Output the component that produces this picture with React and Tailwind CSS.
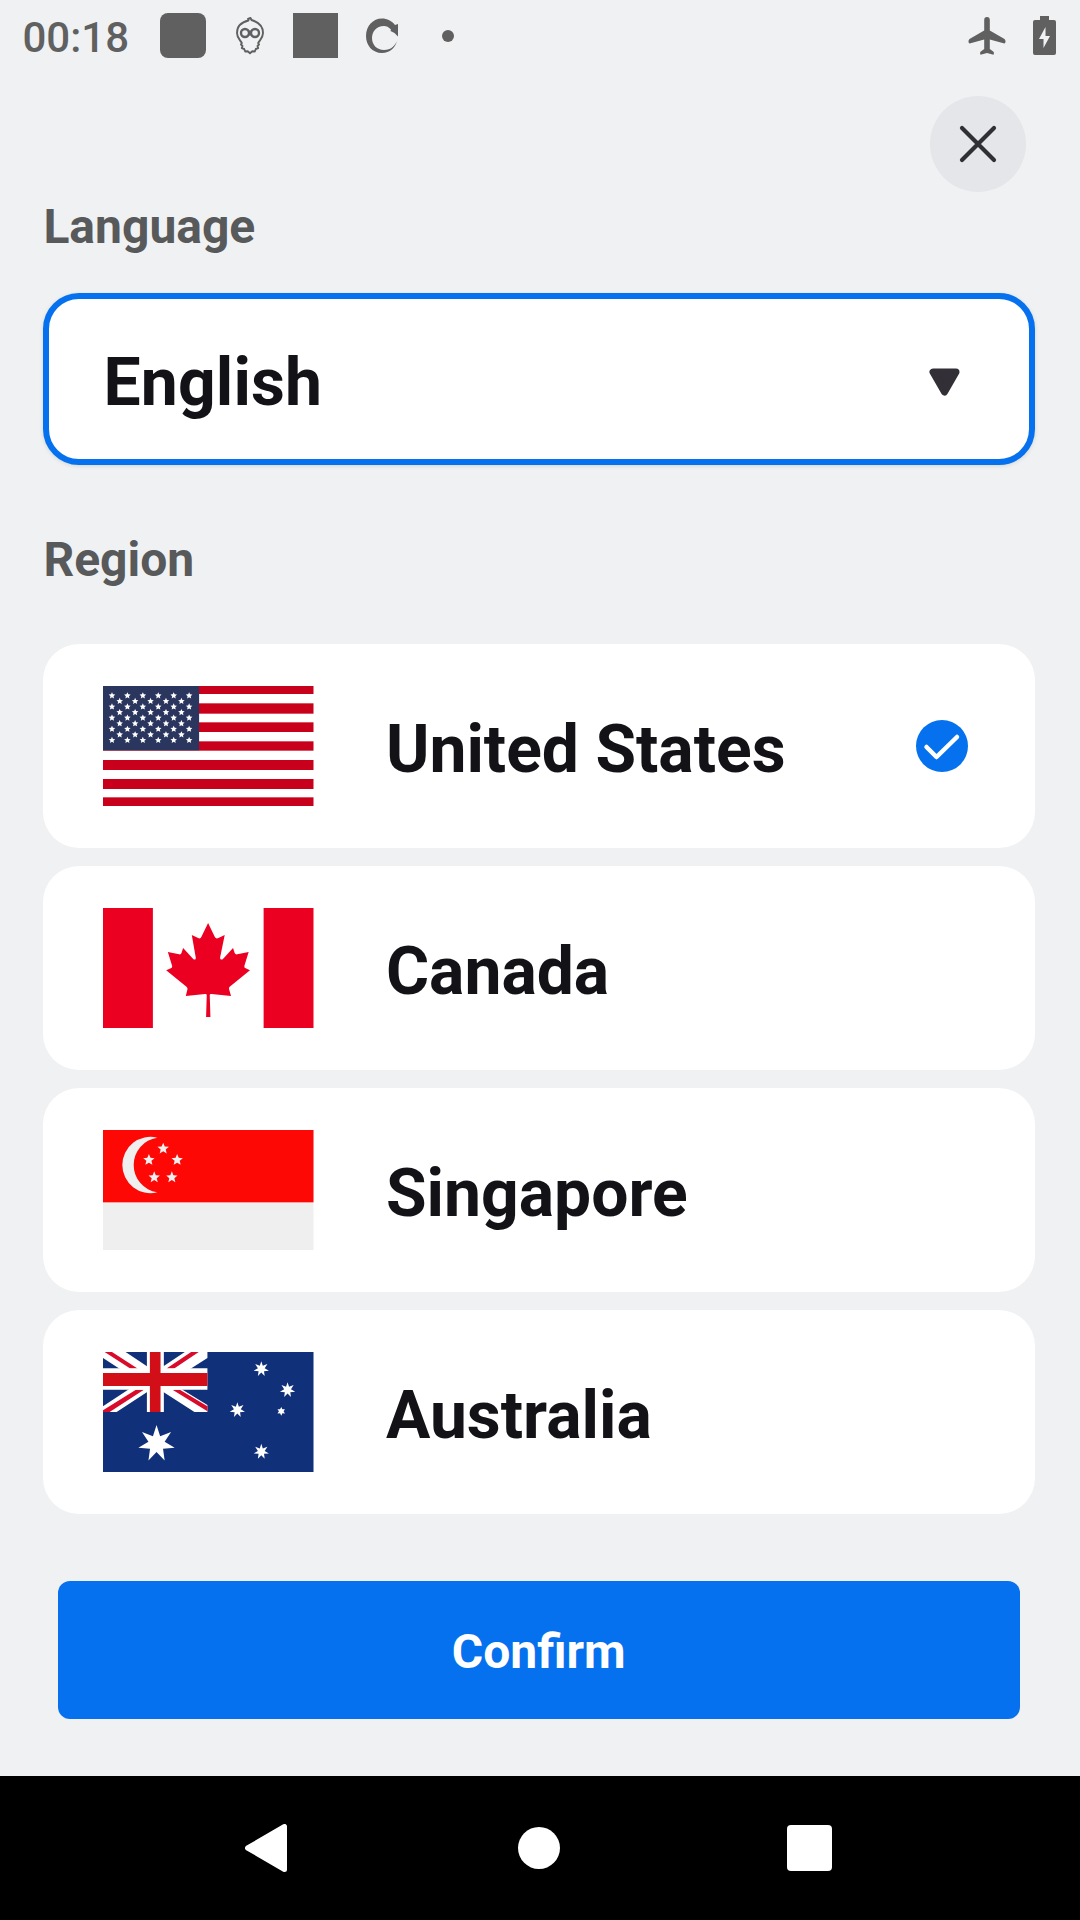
function starPoints(cx, cy, outer, inner, tips = 5) {
  const pts = [];
  for (let i = 0; i < tips * 2; i++) {
    const r = i % 2 ? inner : outer;
    const a = (Math.PI * i) / tips - Math.PI / 2;
    pts.push(`${(cx + r * Math.cos(a)).toFixed(2)},${(cy + r * Math.sin(a)).toFixed(2)}`);
  }
  return pts.join(' ');
}

function FlagUS() {
  const stars = [];
  for (let row = 0; row < 9; row++) {
    const odd = row % 2 === 1;
    for (let col = 0; col < (odd ? 5 : 6); col++) {
      stars.push([66 + col * 46.4 + (odd ? 23.2 : 0), 77 + row * 16.7]);
    }
  }
  const stripes = [[48, 24], [100, 31], [157, 29], [214, 28], [270, 30], [327, 30], [382, 26]];
  return (
    <svg className="h-[120px] w-[210.5px] shrink-0" viewBox="39 48 633 360" preserveAspectRatio="none">
      <rect x="39" y="48" width="633" height="360" fill="#fff" />
      {stripes.map(([y, h]) => <rect key={y} x="39" y={y} width="633" height={h} fill="#c9001b" />)}
      <rect x="39" y="48" width="289" height="193" fill="#2b365f" />
      {stars.map(([x, y]) => <polygon key={`${x}-${y}`} points={starPoints(x, y, 10.3, 4.9)} fill="#fff" />)}
    </svg>
  );
}

function FlagCanada() {
  return (
    <svg className="h-[120px] w-[210.5px] shrink-0" viewBox="39 54 633 360" preserveAspectRatio="none">
      <rect x="39" y="54" width="633" height="360" fill="#fff" />
      <rect x="39" y="54" width="150" height="360" fill="#eb0021" />
      <rect x="522" y="54" width="150" height="360" fill="#eb0021" />
      <path
        fill="#eb0021"
        d="M355 99L375 140Q379 148 386 144L405 135L391 203Q391 211 399 208L430 174L435 189Q437 194 443 193L477 186L464 228Q463 233 468 235L481 241L420 290Q417 293 418 297L424 318L365 312Q360 311 360 316L362 381H349L351 316Q351 311 346 312L288 318L293 298Q294 293 290 290L229 241L243 235Q248 233 247 228L234 186L268 193Q274 194 275 189L280 174L311 208Q319 211 318 203L306 135L325 144Q332 148 335 140Z"
      />
    </svg>
  );
}

function FlagSingapore() {
  const stars = [[220, 101], [177, 135], [262, 135], [193, 187], [246, 187]];
  return (
    <svg className="h-[120px] w-[210.5px] shrink-0" viewBox="39 45 633 360" preserveAspectRatio="none">
      <rect x="39" y="45" width="633" height="360" fill="#efefef" />
      <rect x="39" y="45" width="633" height="217" fill="#fe0806" />
      <path d="M202 68A84.5 84.5 0 1 0 202 232A82.900 82.900 0 0 1 202 68Z" fill="#efefef" />
      {stars.map(([x, y]) => <polygon key={`${x}-${y}`} points={starPoints(x, y, 18, 8)} fill="#efefef" />)}
    </svg>
  );
}

function FlagAustralia() {
  const stars = [[515, 102], [594, 165], [443, 225], [515, 350]];
  return (
    <svg className="h-[120px] w-[210.5px] shrink-0" viewBox="39 51 633 360" preserveAspectRatio="none">
      <rect x="39" y="51" width="633" height="360" fill="#10307a" />
      <path d="M39 51H107L196 110L285 51H353V69L240 141L353 210V231H314L196 155L80 231H39V214L150 141L39 69Z" fill="#fff" />
      <path d="M44 51H66L144 101H122ZM304 51H327L252 101H229ZM39 231V226L138 164H162L59 231ZM248 164H270L353 214V229Z" fill="#d90b2b" />
      <path d="M171 51H222V100H353V164H222V231H171V164H39V100H171Z" fill="#fff" />
      <path d="M180 51H212V114H353V153H212V231H180V153H39V114H180Z" fill="#d20e18" />
      <polygon points={starPoints(200, 326, 56, 25, 7)} fill="#fff" />
      {stars.map(([x, y]) => <polygon key={`${x}-${y}`} points={starPoints(x, y, 23.5, 10.5, 7)} fill="#fff" />)}
      <polygon points={starPoints(575, 229, 13, 7, 6)} fill="#fff" />
    </svg>
  );
}

const regions = [
  { name: 'United States', Flag: FlagUS, selected: true },
  { name: 'Canada', Flag: FlagCanada },
  { name: 'Singapore', Flag: FlagSingapore },
  { name: 'Australia', Flag: FlagAustralia },
];

function StatusBar() {
  return (
    <header className="flex h-[72px] items-start justify-between pl-[22.500px] pr-6 text-[#606060]">
      <div className="flex items-start">
        <span className="mt-[13px] w-[137.500px] text-[42px] leading-[50px] font-medium">00:18</span>
        <span className="mt-[13px] h-[45px] w-[46px] rounded-[8px] bg-[#606060]" />
        <svg className="mt-[17px] ml-[30px] h-[38px] w-7" viewBox="0 0 28 38" fill="none" stroke="currentColor" strokeWidth="1.900">
          <path d="M12 2L14.500 1L15.500 3C22 5 27 9 27 16C27 21 24 23 22.200 26L23 27.500L21.500 29L22.200 31L19.800 32L18.800 34.500L16.300 34.300L14 36.300L11.700 34.300L9.200 34.500L8.200 32L5.800 31L6.500 29L5 27.500L5.800 26C4 23 1 21 1 16C1 9 6 5 12.500 3.500Z" strokeLinejoin="round" />
          <circle cx="9" cy="16" r="4" strokeWidth="2.400" />
          <circle cx="19" cy="16" r="4" strokeWidth="2.400" />
          <path d="M12.500 14L15.500 18M15.500 14L12.500 18" strokeWidth="2.200" />
        </svg>
        <span className="mt-[13px] ml-[29px] h-[45px] w-[45px] bg-[#606060]" />
        <svg className="mt-[18px] ml-7 h-9 w-8" viewBox="0 0 32 36" fill="currentColor">
          <path d="M31.500 22C29 30 24 35 16 35C6 35 0 27 0 18C0 8 7 .5 16 .5C21 .5 26 3 29 7L32 6V18.500L28.500 15L24.500 13L25 11.500C22.500 9 20.500 8 18 8C10 8 6 14 6 20C6 27 11 32 18 32C25 32 29 28 31.500 22Z" />
        </svg>
        <span className="mt-[30px] ml-11 size-3 rounded-full bg-[#606060]" />
      </div>
      <div className="flex items-start">
        <svg className="mt-[17px] h-[38px] w-[38px]" viewBox="0 0 38 38" fill="currentColor">
          <path d="M16.200 3Q16.200 0 19 0Q21.800 0 21.800 3V13.500L36.500 22Q37.700 22.800 37.500 25Q37.300 26.800 35.500 26.300L21.800 22.500V32L25.500 34.800Q26.500 36 25.500 37.700L19 36L12.500 37.700Q11.500 36 12.500 34.800L16.200 32V22.500L2.500 26.300Q.7 26.800.5 25Q.3 22.800 1.500 22L16.200 13.500Z" />
        </svg>
        <svg className="mt-4 ml-[27px] h-[39px] w-[23px]" viewBox="0 0 23 39">
          <path d="M7 0H16V4H21Q23 4 23 6V37Q23 39 21 39H2Q0 39 0 37V6Q0 4 2 4H7Z" fill="currentColor" />
          <path d="M12.500 11L6 23H10.500V32L17 20H12.500Z" fill="#eff1f3" />
        </svg>
      </div>
    </header>
  );
}

function NavBar() {
  return (
    <nav className="flex h-36 items-center bg-black">
      <svg className="ml-[245px] h-12 w-[42px]" viewBox="0 0 42 48">
        <path d="M2.500 24L39.500 2.500V45.500Z" fill="#fff" stroke="#fff" strokeWidth="5" strokeLinejoin="round" />
      </svg>
      <span className="ml-[231px] size-[42px] rounded-full bg-white" />
      <span className="ml-[226.5px] size-[45.5px] rounded-[4px] bg-white" />
    </nav>
  );
}

export default function App() {
  return (
    <div className="flex h-[1920px] w-[1080px] flex-col bg-[#eff1f3] font-['Roboto',sans-serif]">
      <StatusBar />
      <main className="flex flex-1 flex-col pr-[45px] pl-[43.4px]">
        <button aria-label="Close" className="mt-6 mr-[9px] flex size-24 shrink-0 items-center justify-center self-end rounded-full bg-[#e4e6ea]">
          <svg className="size-10" viewBox="0 0 40 40" stroke="#302f35" strokeWidth="4.200" strokeLinecap="round">
            <path d="M4 4L36 36M36 4L4 36" />
          </svg>
        </button>
        <h2 className="mt-[7px] h-14 text-[48px] leading-[56px] font-bold text-[#58595b]">Language</h2>
        <button className="mt-[38px] flex h-[172px] shrink-0 items-center justify-between rounded-[36px] border-6 border-[#0571ee] bg-white pr-[69px] pl-[54.100px] text-left shadow-[0_1px_4px_rgba(0,0,0,0.12)]">
          <span className="pt-2 text-[66px] leading-[78px] font-bold tracking-[0.150px] text-[#131217]">English</span>
          <svg className="mt-[6px] h-7 w-[31px]" viewBox="0 0 31 28">
            <path d="M4 4H27L15.500 24Z" fill="#322f37" stroke="#322f37" strokeWidth="7" strokeLinejoin="round" />
          </svg>
        </button>
        <h2 className="mt-[67px] h-14 text-[48px] leading-[56px] font-bold text-[#58595b]">Region</h2>
        <ul className="mt-14 flex flex-col gap-[18px]">
          {regions.map(({ name, Flag, selected }) => (
            <li key={name} className="flex h-[204px] items-center rounded-[36px] bg-white pr-[67px] pl-[60px]">
              <Flag />
              <span className="ml-[72px] flex-1 pt-2 text-[66px] leading-[78px] font-bold text-[#131217]">{name}</span>
              {selected && (
                <svg className="size-[52px]" viewBox="0 0 52 52">
                  <circle cx="26" cy="26" r="26" fill="#0571ee" />
                  <path d="M10.500 27L20.500 37L41 17" fill="none" stroke="#fff" strokeWidth="4.500" strokeLinecap="round" strokeLinejoin="round" />
                </svg>
              )}
            </li>
          ))}
        </ul>
        <button className="mt-[67px] mr-[15.500px] ml-[14.600px] h-[138px] shrink-0 rounded-[12px] bg-[#0571ee] pt-1 text-[48px] leading-[56px] font-bold text-white">Confirm</button>
      </main>
      <NavBar />
    </div>
  );
}
